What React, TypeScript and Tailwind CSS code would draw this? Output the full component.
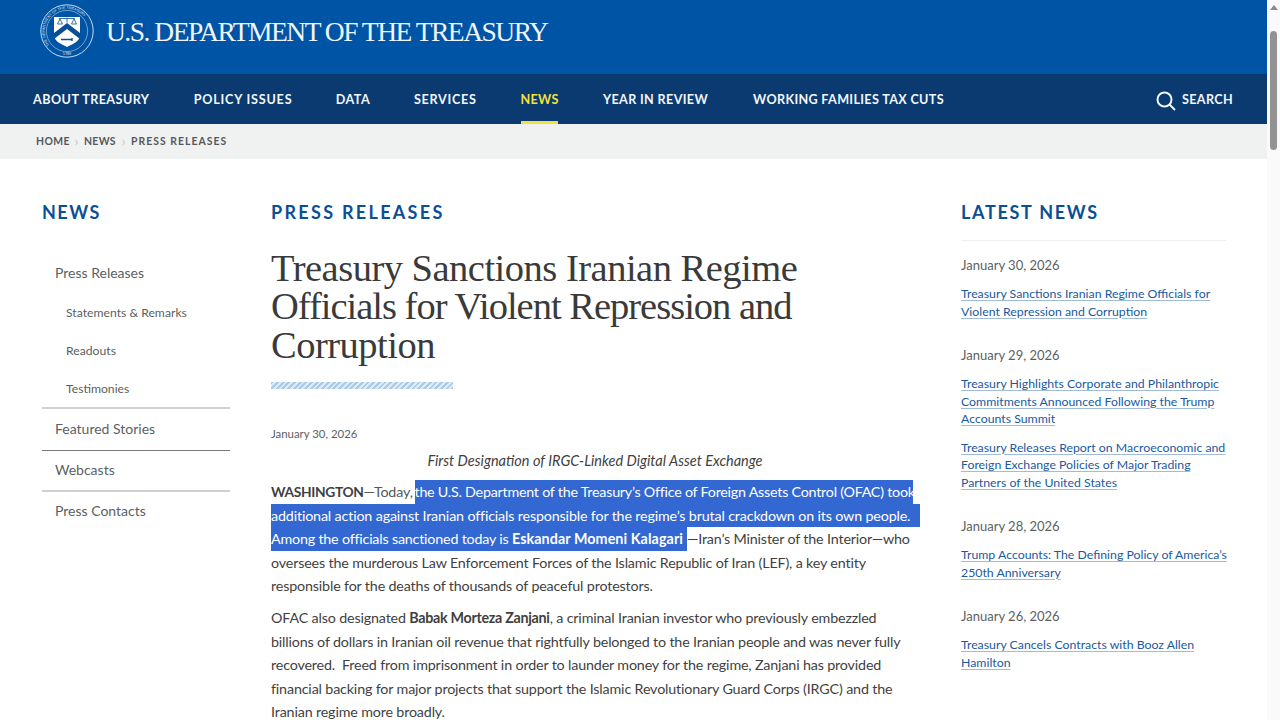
import React from "react";

const sans = "font-['Lato','Noto_Sans',sans-serif]";

const navItems = [
  { label: "ABOUT TREASURY", size: "w-[116.5px] tracking-[0.45px]" },
  { label: "POLICY ISSUES", size: "w-[98px] tracking-[0.8px]" },
  { label: "DATA", size: "w-[33px] tracking-[0.5px]" },
  { label: "SERVICES", size: "w-[62.5px] tracking-[0.7px]" },
  { label: "NEWS", size: "w-[37px] tracking-[0.3px]" },
  { label: "YEAR IN REVIEW", size: "w-[106px] tracking-[0.35px]" },
  { label: "WORKING FAMILIES TAX CUTS", size: "w-[191px] tracking-[0.33px]" },
];

const latest = [
  { date: "January 30, 2026", links: [["Treasury Sanctions Iranian Regime Officials for", "Violent Repression and Corruption"]] },
  {
    date: "January 29, 2026",
    links: [
      ["Treasury Highlights Corporate and Philanthropic", "Commitments Announced Following the Trump", "Accounts Summit"],
      ["Treasury Releases Report on Macroeconomic and", "Foreign Exchange Policies of Major Trading", "Partners of the United States"],
    ],
  },
  { date: "January 28, 2026", links: [["Trump Accounts: The Defining Policy of America\u2019s", "250th Anniversary"]] },
  { date: "January 26, 2026", links: [["Treasury Cancels Contracts with Booz Allen", "Hamilton"]] },
];

const Seal = () => (
  <svg width="54" height="54" viewBox="0 0 54 54" className="shrink-0">
    <defs>
      <path id="sealTop" d="M9.5 41A22.3 22.3 0 1 1 44.5 41" />
    </defs>
    <circle cx="27" cy="27" r="26.2" fill="none" stroke="#dfeaf5" strokeWidth="0.9" />
    <circle cx="27" cy="27" r="20.6" fill="none" stroke="#dfeaf5" strokeWidth="0.5" />
    <text fontSize="3.7" fill="#dfeaf5" fontFamily="Liberation Sans, sans-serif">
      <textPath href="#sealTop">THE DEPARTMENT OF THE TREASURY</textPath>
    </text>
    <text x="27" y="50.5" textAnchor="middle" fontSize="3.8" fill="#dfeaf5" fontFamily="Liberation Sans, sans-serif">
      1789
    </text>
    <path d="M14 13h26v18c0 6-7 9-13 12c-6-3-13-6-13-12z" fill="#ffffff" />
    <path d="M14 29l13-10l13 10v6l-13-10l-13 10z" fill="#0a4f96" />
    <path d="M14 26l13-10l13 10" fill="none" stroke="#ffffff" strokeWidth="1" />
    <path d="M19 14.5h16M27 13.5v5M20 15l-2.500 5h5zM34 15l-2.500 5h5z" stroke="#0a4f96" strokeWidth="0.8" fill="none" />
    <path d="M21 35.500h11M32 34v3" stroke="#0a4f96" strokeWidth="1.400" fill="none" />
  </svg>
);

const Article = () => (
  <div className={`text-[#3f3f3f] text-[14.3px] leading-[23.55px] tracking-[-0.16px] ${sans}`}>
    <div className="whitespace-nowrap">
      <span className="inline-block w-[143.5px]">
        <b className="font-bold text-[13.8px] tracking-[-0.35px]">WASHINGTON</b>
        <span className="text-[#55585c]">{"\u2014Today, "}</span>
      </span>
      <span className="inline-block bg-[#3367d1] text-white w-[498px] tracking-[-0.24px]">the U.S. Department of the Treasury{"\u2019"}s Office of Foreign Assets Control (OFAC) took</span>
    </div>
    <div className="whitespace-nowrap">
      <span className="inline-block bg-[#3367d1] text-white w-[649px]">additional action against Iranian officials responsible for the regime{"\u2019"}s brutal crackdown on its own people.</span>
    </div>
    <div className="whitespace-nowrap">
      <span className="inline-block bg-[#3367d1] text-white w-[416px] tracking-[-0.2px]">
        Among the officials sanctioned today is <b className="font-bold tracking-[0.08px]">Eskandar Momeni Kalagari</b>
      </span>
      <span>{"\u2014Iran\u2019s Minister of the Interior\u2014who"}</span>
    </div>
    <div className="whitespace-nowrap">oversees the murderous Law Enforcement Forces of the Islamic Republic of Iran (LEF), a key entity</div>
    <div className="whitespace-nowrap">responsible for the deaths of thousands of peaceful protestors.</div>
    <div className="mt-2 whitespace-nowrap">
      OFAC also designated <b className="font-bold tracking-[-0.3px]">Babak Morteza Zanjani</b>, a criminal Iranian investor who previously embezzled
    </div>
    <div className="whitespace-nowrap">billions of dollars in Iranian oil revenue that rightfully belonged to the Iranian people and was never fully</div>
    <div className="whitespace-pre">recovered.  Freed from imprisonment in order to launder money for the regime, Zanjani has provided</div>
    <div className="whitespace-nowrap">financial backing for major projects that support the Islamic Revolutionary Guard Corps (IRGC) and the</div>
    <div className="whitespace-nowrap">Iranian regime more broadly.</div>
  </div>
);

export default function App() {
  return (
    <div className={`flex h-[720px] w-[1280px] overflow-hidden bg-white ${sans}`}>
      <div className="w-[1267px] shrink-0">
        <header className="h-[74px] bg-[#0054a6] pl-[40px] pt-[4px] flex items-start gap-[12px]">
          <Seal />
          <span className="mt-[10px] text-[27.5px] leading-[36px] tracking-[-1.5px] text-[#eef5fb] font-['Liberation_Serif',serif] whitespace-nowrap">U.S. DEPARTMENT OF THE TREASURY</span>
        </header>
        <nav className="h-[50px] bg-[#0a3a70] flex items-stretch pl-[33px] pr-[34px] text-[12.6px] font-bold">
          <div className="flex gap-[44.5px]">
            {navItems.map((item) => (
              <a
                key={item.label}
                className={`flex items-center justify-center whitespace-nowrap border-b-[3px] pt-[5px] ${item.size} ${item.label === "NEWS" ? "text-[#f2e33c] border-[#f2e33c]" : "text-[#f3f6fa] border-transparent"}`}
              >
                {item.label}
              </a>
            ))}
          </div>
          <div className="ml-auto flex items-center gap-[6px] text-[#f3f6fa] tracking-[0.35px]">
            <svg width="20" height="20" viewBox="0 0 20 20" fill="none" stroke="#eef5fb" strokeWidth="2" className="mt-[3px]">
              <circle cx="8.500" cy="8.500" r="7" />
              <path d="M13.500 13.500L19 19" />
            </svg>
            <span className="pt-[2px]">SEARCH</span>
          </div>
        </nav>
        <div className="h-[35px] bg-[#f0f1f1] pl-[36px] flex items-center text-[10.4px] font-bold text-[#55585c]">
          <span className="w-[33px] tracking-[0.4px]">HOME</span>
          <span className="w-[15px] text-center text-[13px] leading-none text-[#c4c6c8] font-normal">{"\u203A"}</span>
          <span className="w-[32px] tracking-[0.35px]">NEWS</span>
          <span className="w-[15px] text-center text-[13px] leading-none text-[#c4c6c8] font-normal">{"\u203A"}</span>
          <span className="tracking-[1.05px]">PRESS RELEASES</span>
        </div>

        <main className="flex pl-[42px] pt-[41px]">
          <aside className="w-[188px] shrink-0">
            <h2 className="text-[18px] leading-[24px] font-bold tracking-[1.5px] text-[#0a4f96]">NEWS</h2>
            <ul className="mt-[37px] text-[#5c5f62]">
              <li className="pl-[13px] text-[14px] leading-[22px] pt-[1px]">Press Releases</li>
              <li className="pl-[24px] text-[12.2px] leading-[20px] mt-[19px]">Statements &amp; Remarks</li>
              <li className="pl-[24px] text-[12.2px] leading-[20px] mt-[18px]">Readouts</li>
              <li className="pl-[24px] text-[12.2px] leading-[20px] mt-[18px] pb-[8px] border-b-2 border-[#cfd0d1]">Testimonies</li>
              <li className="pl-[13px] text-[14px] leading-[22px] pt-[9px] pb-[10px] border-b border-[#77797b]">Featured Stories</li>
              <li className="pl-[13px] text-[14px] leading-[22px] pt-[8px] pb-[9px] border-b-2 border-[#cfd0d1]">Webcasts</li>
              <li className="pl-[13px] text-[14px] leading-[22px] pt-[8px]">Press Contacts</li>
            </ul>
          </aside>

          <article className="w-[648px] ml-[41px] mr-[42px] shrink-0">
            <h2 className="text-[18px] leading-[24px] font-bold tracking-[2.3px] text-[#0a4f96]">PRESS RELEASES</h2>
            <h1 className="mt-[25px] text-[38.5px] leading-[38.4px] text-[#3a3a3a] font-['Liberation_Serif',serif] whitespace-nowrap">
              <span className="block tracking-[-0.5px]">Treasury Sanctions Iranian Regime</span>
              <span className="block tracking-[-1px]">Officials for Violent Repression and</span>
              <span className="block tracking-[-0.5px]">Corruption</span>
            </h1>
            <div className="mt-[18px] h-[7px] w-[182px] bg-[repeating-linear-gradient(135deg,#a9cbe8_0px,#a9cbe8_2px,#dcebf6_2px,#dcebf6_4px)]" />
            <div className="mt-[37px] text-[11.4px] leading-[16px] text-[#5c5f62]">January 30, 2026</div>
            <div className="mt-[9px] text-center italic text-[14.5px] leading-[20px] text-[#3f3f3f]">First Designation of IRGC-Linked Digital Asset Exchange</div>
            <div className="mt-[9px]">
              <Article />
            </div>
          </article>

          <aside className="w-[265px] shrink-0">
            <h2 className="text-[18px] leading-[24px] font-bold tracking-[1.7px] text-[#0a4f96]">LATEST NEWS</h2>
            <div className="mt-[16px] border-t border-[#eeeeee] pt-[16px]">
              {latest.map((group) => (
                <div key={group.date} className="mb-[27px]">
                  <div className="text-[13px] leading-[17px] text-[#5c5f62]">{group.date}</div>
                  {group.links.map((lines) => (
                    <a key={lines[0]} className="mt-[11px] block text-[12.3px] leading-[17.5px] text-[#1a5a9e] underline decoration-[#9fbddb] underline-offset-2 whitespace-nowrap">
                      {lines.map((line) => (
                        <span key={line} className="block">
                          {line}
                        </span>
                      ))}
                    </a>
                  ))}
                </div>
              ))}
            </div>
          </aside>
        </main>
      </div>

      <div className="w-[13px] bg-[#fafafa] flex flex-col items-center pt-[5px]">
        <div className="h-0 w-0 border-x-[4px] border-b-[5px] border-x-transparent border-b-[#8a8a8a]" />
        <div className="mt-[21px] h-[119px] w-[7px] rounded-full bg-[#929292]" />
      </div>
    </div>
  );
}
